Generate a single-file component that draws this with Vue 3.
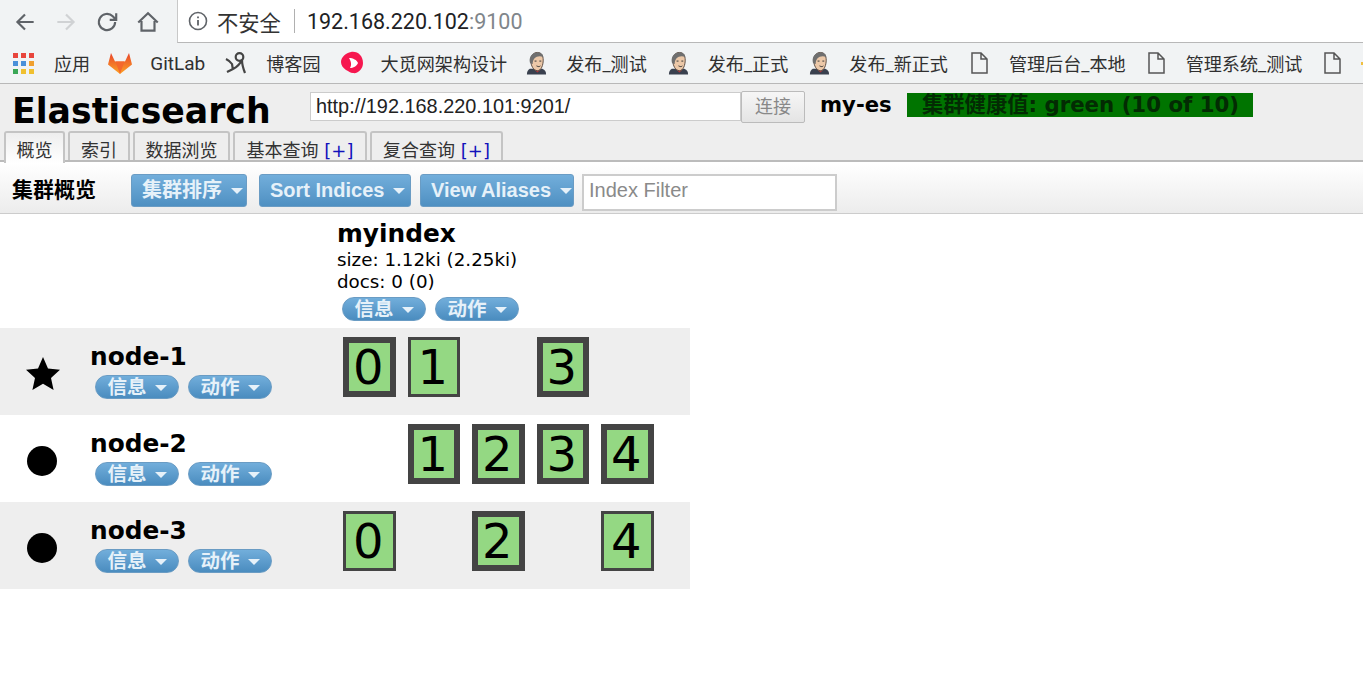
<template>
    <div class="page">
        <div class="browser_top">
            <div class="nav_icons">
                <svg class="nav_icon" viewBox="0 0 24 24"><path d="M20 12H5M12 5l-7 7 7 7" fill="none" stroke="#5f6368" stroke-width="2"/></svg>
                <svg class="nav_icon" viewBox="0 0 24 24"><path d="M4 12h15M12 5l7 7-7 7" fill="none" stroke="#d0d2d4" stroke-width="2"/></svg>
                <svg class="nav_icon" viewBox="0 0 24 24"><path d="M19.5 12a7.5 7.5 0 1 1-2.2-5.3L20 9.5M20.500 4v6h-6" fill="none" stroke="#5f6368" stroke-width="2"/></svg>
                <svg class="nav_icon" viewBox="0 0 24 24"><path d="M3 12.500 12 4l9 8.500M6 11v9h12v-9" fill="none" stroke="#5f6368" stroke-width="2"/></svg>
            </div>
            <div class="address">
                <svg class="info_icon" viewBox="0 0 20 20"><circle cx="10" cy="10" r="8.500" fill="none" stroke="#5f6368" stroke-width="1.600"/><path d="M10 9v5.500M10 5.500v1.800" stroke="#5f6368" stroke-width="1.800"/></svg>
                <span class="not_safe">不安全</span>
                <span class="address_sep"></span>
                <span class="url">192.168.220.102<span class="url_port">:9100</span></span>
            </div>
        </div>

        <div class="bookmarks">
            <svg class="bm_apps" viewBox="0 0 21 21">
                <rect v-for="cell in appCells" :key="cell.id" :x="cell.x" :y="cell.y" width="5" height="5" :fill="cell.color"/>
            </svg>
            <span class="bm_text bm_first">应用</span>

            <svg class="bm_icon" viewBox="0 0 24 24">
                <defs>
                    <linearGradient id="foxFill" x1="0" y1="0" x2="0" y2="1">
                        <stop offset="0" stop-color="#e8452a"/>
                        <stop offset="1" stop-color="#fca326"/>
                    </linearGradient>
                </defs>
                <path d="M12 23 0 13.500 3 2 7 10.500h10L21 2 24 13.500z" fill="url(#foxFill)"/>
                <path d="M12 23 7.500 10.500h9z" fill="#f4682c"/>
            </svg>
            <span class="bm_text bm_gitlab">GitLab</span>

            <svg class="bm_icon" viewBox="0 0 24 24">
                <circle cx="15.500" cy="6" r="3.800" fill="none" stroke="#444" stroke-width="2.200"/>
                <path d="M2 8c2 1 4 2 6 5l1 6M3 21l6-3c4-2 7-5 9-9 0 4 1 8 3 13" fill="none" stroke="#444" stroke-width="2.200"/>
            </svg>
            <span class="bm_text">博客园</span>

            <svg class="bm_icon" viewBox="0 0 24 24">
                <path d="M11 1c7-1 12 4 12 11 0 6-5 11-10 10-3 0-4-2-7-3-3-2-5-5-5-8C1 6 6 2 11 1z" fill="#f6174f"/>
                <path d="M9 7c4 0 8 2 9 5-1 3-5 5-8 5 2-3 1-7-1-10z" fill="#fff"/>
            </svg>
            <span class="bm_text bm_dami">大觅网架构设计</span>

            <template v-for="name in jenkinsLinks" :key="name">
                <svg class="bm_jenkins" viewBox="0 0 24 24">
                    <path d="M5 18c-2 1-3 3-3 6h20c0-3-1-5-4-6z" fill="#39404e"/>
                    <path d="M10 19l3 3 3-3-3 1z" fill="#b8323a"/>
                    <path d="M6 9c0-5 3-8 7-8s6 3 6 8c0 5-2 11-6 11-4 0-7-5-7-11z" fill="#ecc8a8" stroke="#5b4a40" stroke-width="1"/>
                    <path d="M5 11c-1-6 3-10 8-10 4 0 6 2 6 5-3-2-7-1-9 1-1 1-2 3-2 6-2 0-3-1-3-2z" fill="#6f6f6f"/>
                    <path d="M10 10h2M15 10h2M12 15c2 1 3 1 4 0" fill="none" stroke="#333" stroke-width="1"/>
                </svg>
                <span class="bm_text bm_jenkins_text">{{name}}</span>
            </template>

            <template v-for="name in pageLinks" :key="name">
                <svg class="bm_doc" viewBox="0 0 17 22"><path d="M1 1h9l6 6v14H1zM10 1v6h6" fill="none" stroke="#555" stroke-width="1.500"/></svg>
                <span class="bm_text bm_doc_text">{{name}}</span>
            </template>
            <svg class="bm_doc" viewBox="0 0 17 22"><path d="M1 1h9l6 6v14H1zM10 1v6h6" fill="none" stroke="#555" stroke-width="1.500"/></svg>
            <span class="bm_more"></span>
        </div>

        <div class="es_header">
            <div class="es_top">
                <div class="es_title">Elasticsearch</div>
                <input class="es_url" value="http://192.168.220.101:9201/" />
                <div class="es_connect">连接</div>
                <div class="es_cluster">my-es</div>
                <div class="es_health">集群健康值: green (10 of 10)</div>
            </div>
            <div class="es_tabs">
                <div v-for="tab in tabs" :key="tab.name" :class="['es_tab', {es_tab_active: tab.active}]" :style="{width: tab.width + 'px'}">
                    {{tab.name}}<span v-if="tab.plus" class="es_plus"> [+]</span>
                </div>
            </div>
        </div>

        <div class="toolbar">
            <div class="toolbar_title">集群概览</div>
            <div class="tool_button tool_sort_nodes">集群排序<span class="caret"></span></div>
            <div class="tool_button tool_sort_indices">Sort Indices<span class="caret"></span></div>
            <div class="tool_button tool_aliases">View Aliases<span class="caret"></span></div>
            <input class="index_filter" placeholder="Index Filter" />
        </div>

        <div class="overview">
            <div class="index_head">
                <div class="index_name">myindex</div>
                <div class="index_info">size: 1.12ki (2.25ki)</div>
                <div class="index_info">docs: 0 (0)</div>
                <div class="pills index_pills">
                    <div class="pill">信息<span class="caret"></span></div>
                    <div class="pill">动作<span class="caret"></span></div>
                </div>
            </div>
            <div v-for="(node, i) in nodes" :key="node.name" :class="['node_row', {node_row_grey: i % 2 === 0}]">
                <div class="node_mark">
                    <svg v-if="node.master" class="mark_star" viewBox="0 0 34 33"><path d="M17 0l5 11.500 12 1.200-9 8.300 2.600 12L17 26.700 6.400 33 9 21 0 12.700l12-1.200z" fill="#000"/></svg>
                    <div v-else class="mark_dot"></div>
                </div>
                <div class="node_info">
                    <div class="node_name">{{node.name}}</div>
                    <div class="pills">
                        <div class="pill">信息<span class="caret"></span></div>
                        <div class="pill">动作<span class="caret"></span></div>
                    </div>
                </div>
                <div class="shards">
                    <div v-for="n in 5" :key="n" class="shard_cell">
                        <div v-if="node.shards[n - 1]" :class="['shard', {shard_primary: node.shards[n - 1] === 'p'}]">{{n - 1}}</div>
                    </div>
                </div>
            </div>
        </div>
    </div>
</template>

<script setup>
const appColors = ["#e8453c", "#e8453c", "#e8453c", "#4a90d9", "#4a90d9", "#f0a030", "#3aa757", "#f0c030", "#f0c030"];
const appCells = appColors.map((color, id) => ({
    id,
    color,
    x: (id % 3) * 8,
    y: Math.floor(id / 3) * 8
}));

const jenkinsLinks = ["发布_测试", "发布_正式", "发布_新正式"];
const pageLinks = ["管理后台_本地", "管理系统_测试"];

const tabs = [
    {name: "概览", width: 61, active: true},
    {name: "索引", width: 62},
    {name: "数据浏览", width: 97},
    {name: "基本查询", width: 134, plus: true},
    {name: "复合查询", width: 133, plus: true}
];

const nodes = [
    {name: "node-1", master: true, shards: ["p", "r", "", "p", ""]},
    {name: "node-2", shards: ["", "p", "p", "p", "p"]},
    {name: "node-3", shards: ["r", "", "p", "", "r"]}
];
</script>

<style>
html, body {
    margin: 0;
    background: #ffffff;
    overflow: hidden;
}
</style>

<style scoped>
.page {
    width: 1363px;
    height: 674px;
    overflow: hidden;
    font-family: "DejaVu Sans", "Noto Sans CJK SC", sans-serif;
    color: #000000;
}

.browser_top {
    display: flex;
    height: 43px;
    background: #f1f3f4;
}

.nav_icons {
    display: flex;
    align-items: center;
    gap: 15px;
    width: 177px;
    padding-left: 12px;
    box-sizing: border-box;
}

.nav_icon {
    width: 26px;
    height: 26px;
}

.address {
    flex: 1;
    display: flex;
    align-items: center;
    background: #ffffff;
    border-left: 1px solid #c8c8c8;
    border-bottom: 1px solid #b8b8b8;
    padding-left: 10px;
    font-family: "Roboto", "Noto Sans CJK SC", sans-serif;
}

.info_icon {
    width: 20px;
    height: 20px;
}

.not_safe {
    margin-left: 9px;
    font-size: 21.300px;
    color: #333333;
}

.address_sep {
    width: 1px;
    height: 24px;
    margin: 0 12px 0 13px;
    background: #b0b0b0;
}

.url {
    font-size: 21.500px;
    color: #202124;
}

.url_port {
    color: #80868b;
}

.bookmarks {
    display: flex;
    align-items: center;
    height: 40px;
    padding-left: 13px;
    background: #f1f3f4;
    border-bottom: 1px solid #b8b8b8;
    font-family: "Roboto", "Noto Sans CJK SC", sans-serif;
    white-space: nowrap;
}

.bm_apps {
    width: 21px;
    height: 21px;
    flex: none;
}

.bm_text {
    margin: 0 19px 0 18px;
    font-size: 18.100px;
    color: #303030;
}

.bm_first {
    margin-left: 20px;
    margin-right: 18px;
}

.bm_gitlab {
    font-size: 19px;
}

.bm_dami {
    margin-left: 17px;
    margin-right: 18px;
}

.bm_icon {
    width: 24px;
    height: 24px;
    flex: none;
}

.bm_jenkins {
    width: 23px;
    height: 24px;
    flex: none;
}

.bm_jenkins_text {
    margin-right: 20px;
}

.bm_doc {
    width: 17px;
    height: 22px;
    flex: none;
    margin-left: 3px;
}

.bm_doc_text {
    margin-left: 21px;
    margin-right: 19px;
}

.bm_more {
    flex: none;
    width: 8px;
    height: 3px;
    margin-left: 20px;
    background: #f0c040;
}

.es_header {
    height: 78px;
    background: #eeeeee;
    border-bottom: 2px solid #bbbbbb;
    box-sizing: border-box;
    padding-top: 7px;
}

.es_top {
    display: flex;
    align-items: flex-start;
    height: 40px;
    padding-left: 12px;
}

.es_title {
    width: 298px;
    font-size: 34.700px;
    line-height: 40px;
    font-weight: bold;
    white-space: nowrap;
}

.es_url {
    width: 431px;
    height: 29px;
    margin-top: 1px;
    padding: 0 5px;
    box-sizing: border-box;
    border: 1px solid #cccccc;
    background: #ffffff;
    outline: none;
    font-family: "Liberation Sans", sans-serif;
    font-size: 19.900px;
    color: #222222;
}

.es_connect {
    width: 64px;
    height: 32px;
    box-sizing: border-box;
    border: 1px solid #bbbbbb;
    border-radius: 2px;
    background: linear-gradient(#f6f6f6, #e4e4e4);
    color: #888888;
    font-size: 18px;
    line-height: 30px;
    text-align: center;
}

.es_cluster {
    margin-left: 15px;
    width: 87px;
    font-size: 21.200px;
    line-height: 28px;
    font-weight: bold;
    white-space: nowrap;
}

.es_health {
    width: 346px;
    height: 24px;
    margin-top: 2px;
    box-sizing: border-box;
    padding-left: 15px;
    background: #007400;
    color: #032b03;
    font-size: 21.300px;
    line-height: 24px;
    font-weight: bold;
    white-space: nowrap;
}

.es_tabs {
    display: flex;
    gap: 3px;
    padding-left: 4px;
}

.es_tab {
    height: 29px;
    box-sizing: border-box;
    padding-top: 6px;
    border: 2px solid #c4c4c4;
    border-bottom: none;
    border-radius: 3px 3px 0 0;
    background: #eeeeee;
    color: #333333;
    font-size: 18px;
    line-height: 24px;
    text-align: center;
    white-space: nowrap;
}

.es_tab_active {
    height: 32px;
    background: linear-gradient(#eeeeee, #ffffff);
    position: relative;
    z-index: 1;
}

.es_plus {
    color: #1111bb;
}

.toolbar {
    display: flex;
    align-items: flex-start;
    height: 51px;
    margin-top: 1px;
    box-sizing: border-box;
    padding: 11px 0 0 12px;
    background: linear-gradient(#ffffff, #ececec);
    border-bottom: 1px solid #cccccc;
}

.toolbar_title {
    width: 119px;
    font-size: 21px;
    line-height: 33px;
    font-weight: bold;
    white-space: nowrap;
}

.tool_button {
    height: 33px;
    padding-left: 10px;
    box-sizing: border-box;
    border: 1px solid #6a9cc4;
    border-radius: 3px;
    background: linear-gradient(#72aedb, #4f90c2);
    color: #e6f1f9;
    font-family: "Liberation Sans", "Noto Sans CJK SC", sans-serif;
    font-size: 20px;
    line-height: 30px;
    font-weight: bold;
    white-space: nowrap;
}

.tool_sort_nodes {
    width: 116px;
    margin-right: 12px;
}

.tool_sort_indices {
    width: 152px;
    margin-right: 9px;
}

.tool_aliases {
    width: 154px;
    margin-right: 8px;
}

.caret {
    display: inline-block;
    margin-left: 9px;
    vertical-align: 3px;
    border-top: 6px solid #e6f1f9;
    border-left: 6px solid transparent;
    border-right: 6px solid transparent;
}

.index_filter {
    width: 255px;
    height: 37px;
    padding: 0 5px 4px;
    box-sizing: border-box;
    border: 2px solid #cccccc;
    background: #ffffff;
    outline: none;
    font-family: "Liberation Sans", sans-serif;
    font-size: 20px;
}

.index_filter::placeholder {
    color: #8a8a8a;
    opacity: 1;
}

.overview {
    width: 690px;
}

.index_head {
    height: 114px;
    box-sizing: border-box;
    padding: 5px 0 0 337px;
}

.index_name {
    font-size: 24.800px;
    line-height: 30px;
    font-weight: bold;
}

.index_info {
    font-size: 18.300px;
    line-height: 22px;
    white-space: nowrap;
}

.pills {
    display: flex;
    gap: 9px;
}

.index_pills {
    margin: 4px 0 0 5px;
}

.pill {
    width: 84px;
    height: 24px;
    box-sizing: border-box;
    border: 1px solid #6a9cc4;
    border-radius: 12px;
    background: linear-gradient(#72aedb, #4a8cbf);
    color: #e6f1f9;
    font-size: 19.500px;
    line-height: 24px;
    font-weight: bold;
    text-align: center;
    white-space: nowrap;
}

.pill .caret {
    margin-left: 8px;
    border-top-width: 6px;
    border-left-width: 6px;
    border-right-width: 6px;
}

.node_row {
    display: grid;
    grid-template-columns: 91px 252px 1fr;
    height: 87px;
    align-items: center;
}

.node_row_grey {
    background: #eeeeee;
}

.node_mark {
    display: flex;
    justify-content: center;
    width: 84px;
    padding-top: 4px;
}

.mark_star {
    width: 34px;
    height: 33px;
    margin-left: 2px;
}

.mark_dot {
    width: 30px;
    height: 30px;
    border-radius: 50%;
    background: #000000;
}

.node_name {
    font-size: 24.800px;
    line-height: 30px;
    font-weight: bold;
    margin: -2px 0 0 -1px;
}

.node_info .pills {
    margin-left: 4px;
    margin-top: 3px;
}

.shards {
    display: grid;
    grid-template-columns: repeat(5, 64.500px);
    align-self: start;
    padding-top: 9px;
}

.shard_cell {
    height: 60px;
}

.shard {
    width: 52.500px;
    height: 60px;
    box-sizing: border-box;
    padding-right: 2px;
    border: 3px solid #444444;
    background: #94d883;
    font-size: 48px;
    line-height: 54px;
    text-align: center;
}

.shard_primary {
    border-width: 6px;
    line-height: 48px;
}
</style>
